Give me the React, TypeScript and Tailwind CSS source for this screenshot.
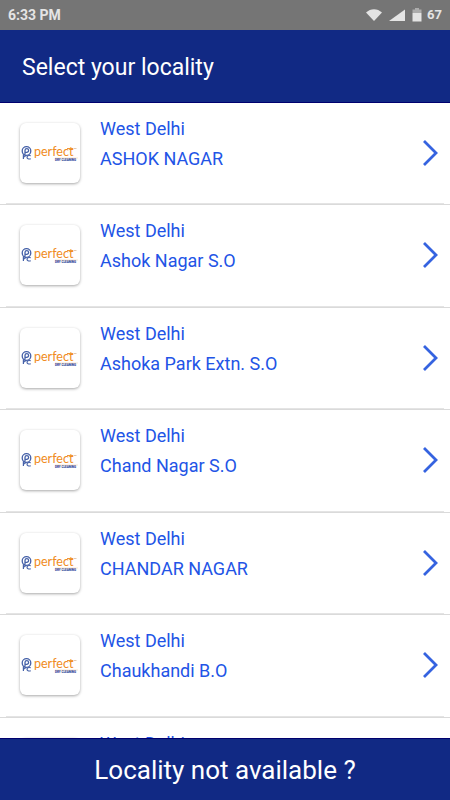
const localities = [
  { city: 'West Delhi', name: 'ASHOK NAGAR' },
  { city: 'West Delhi', name: 'Ashok Nagar S.O' },
  { city: 'West Delhi', name: 'Ashoka Park Extn. S.O' },
  { city: 'West Delhi', name: 'Chand Nagar S.O' },
  { city: 'West Delhi', name: 'CHANDAR NAGAR' },
  { city: 'West Delhi', name: 'Chaukhandi B.O' },
  { city: 'West Delhi', name: 'Chaukhandi' },
]

function StatusBar() {
  return (
    <div className="flex h-[30px] shrink-0 items-center justify-between bg-[#757575] px-2 text-sm font-bold text-[#e4e4e4]">
      <span>6:33 PM</span>
      <div className="flex items-center gap-[7px]">
        <svg width="16" height="12" viewBox="0 0 16 12" fill="currentColor" aria-hidden="true">
          <path d="M0 3.6C4.600-.9 11.400-.9 16 3.600L8 12Z" />
        </svg>
        <svg width="16" height="12" viewBox="0 0 16 12" fill="currentColor" aria-hidden="true">
          <path d="M0 12L16 .5V12Z" />
        </svg>
        <div className="flex items-center gap-[5px]">
          <svg width="10" height="14" viewBox="0 0 10 14" fill="currentColor" aria-hidden="true">
            <path d="M3 0h4v1.500h2.500V5H.5V1.500H3Z" opacity=".5" />
            <path d="M.5 5h9v8.500H.5Z" />
          </svg>
          <span className="text-[13px]">67</span>
        </div>
      </div>
    </div>
  )
}

function Logo() {
  return (
    <svg width="60" height="60" viewBox="0 0 60 60" role="img" aria-label="Perfect Dry Cleaning">
      <g fill="none" stroke="#4460a8">
        <circle cx="6.500" cy="28" r="4.300" strokeWidth="1.300" />
        <path d="M5 31v-3.500a1.800 1.800 0 1 1 1.800 1.800H5" strokeWidth="1.300" />
        <path d="M3.400 31.500v4.500M3.400 31.800c2-.4 3.200 1.600 0 2.200" strokeWidth="1.200" />
        <path d="M10.800 32.800c-2.600-.8-3.800.2-3.800 1.500s1.500 2.200 3.800 1.500" strokeWidth="1.100" />
      </g>
      <text x="14" y="33" fill="#f08c22" fontFamily="Lato, sans-serif" fontSize="12.500">
        perfect
      </text>
      <path d="M47 25.500h6" stroke="#f0983a" strokeWidth="1" />
      <path d="M53.500 25.500h3" stroke="#e3c9b0" strokeWidth="1" />
      <text x="35" y="38" fill="#1f3c94" fontFamily="Roboto, sans-serif" fontSize="3" fontWeight="900">
        DRY CLEANING
      </text>
      <path d="M35 35h23" stroke="#f0983a" strokeWidth=".5" opacity=".5" />
    </svg>
  )
}

function Chevron() {
  return (
    <svg className="shrink-0" width="16" height="28" viewBox="0 0 16 28" fill="none" aria-hidden="true">
      <path d="M2 2L14 14L2 26" stroke="#3563e0" strokeWidth="2.800" />
    </svg>
  )
}

export default function App() {
  return (
    <div className="flex h-screen flex-col bg-white font-[Roboto,sans-serif]">
      <StatusBar />

      <header className="flex h-[73px] shrink-0 items-center border-b border-[#00006e] bg-[#112984] px-[22px] pt-1">
        <h1 className="text-[23px] leading-8 text-white">Select your locality</h1>
      </header>

      <main className="min-h-0 flex-1 overflow-y-auto [scrollbar-width:none]">
        <ul>
          {localities.map(({ city, name }) => (
            <li key={name} className="flex flex-col odd:h-[102px] even:h-[103px]">
              <a href="#" className="flex flex-1 items-start gap-5 pl-5 pr-3">
                <span className="mt-5 shrink-0 overflow-hidden rounded-md bg-white shadow-[0_1px_3px_rgba(0,0,0,0.35)]">
                  <Logo />
                </span>
                <span className="flex-1 pt-[11px] text-lg leading-[30px] text-[#2254e6]">
                  <span className="block">{city}</span>
                  <span className="block">{name}</span>
                </span>
                <span className="mt-9">
                  <Chevron />
                </span>
              </a>
              <div className="mx-[6px] h-px bg-[#e4e4e4]" />
              <div className="h-px bg-[#dadada]" />
            </li>
          ))}
        </ul>
      </main>

      <button
        type="button"
        className="h-[62px] shrink-0 border-t border-[#00006e] bg-[#112984] pt-[2px] text-[26px] text-white"
      >
        Locality not available ?
      </button>
    </div>
  )
}
